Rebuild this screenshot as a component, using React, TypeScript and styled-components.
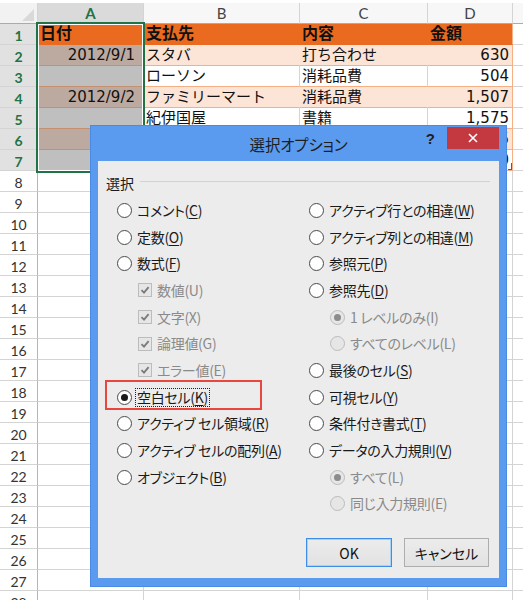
import React from 'react';
import styled, { createGlobalStyle } from 'styled-components';

const GlobalStyle = createGlobalStyle`
  html, body {
    margin: 0;
    padding: 0;
    background: #ffffff;
  }
  body {
    font-family: "Noto Sans CJK JP", sans-serif;
  }
`;

type Fill = 'title' | 'band' | 'white' | 'plain';

interface SheetRow {
  fill: Fill;
  cells: string[];
}

// widths of the row header + columns A..E
const COL_WIDTHS = [38, 106, 156, 128, 85, 80];
const COL_NAMES = ['A', 'B', 'C', 'D', 'E'];

const TABLE_ROWS: SheetRow[] = [
  { fill: 'title', cells: ['日付', '支払先', '内容', '金額'] },
  { fill: 'band', cells: ['2012/9/1', 'スタバ', '打ち合わせ', '630'] },
  { fill: 'white', cells: ['', 'ローソン', '消耗品費', '504'] },
  { fill: 'band', cells: ['2012/9/2', 'ファミリーマート', '消耗品費', '1,507'] },
  { fill: 'white', cells: ['', '紀伊国屋', '書籍', '1,575'] },
  { fill: 'band', cells: ['', 'セブンイレブン', '消耗品費', '315'] },
  { fill: 'white', cells: ['', '丸善', '書籍', '2,940'] },
];

const SHEET_FONT = `"DejaVu Sans", "Noto Sans CJK JP", sans-serif`;
const HEAD_FONT = `Lato, "Liberation Sans", sans-serif`;

const Sheet = styled.div`
  position: relative;
  width: 523px;
  height: 600px;
  overflow: hidden;
  background: #ffffff;
`;

const HeaderRow = styled.div`
  display: flex;
  height: 24px;
  box-sizing: border-box;
  padding-top: 3px;
`;

const Corner = styled.div`
  flex: 0 0 38px;
  box-sizing: border-box;
  display: flex;
  align-items: flex-end;
  justify-content: flex-end;
  padding: 0 3px 2px 0;
  background: #f2f2f2;
  border-right: 1px solid #d4d4d4;
  border-bottom: 1px solid #ababab;

  svg {
    width: 12px;
    height: 12px;
  }
`;

const ColHead = styled.div<{ $w: number; $active?: boolean }>`
  flex: 0 0 ${p => p.$w}px;
  box-sizing: border-box;
  display: flex;
  align-items: center;
  justify-content: center;
  background: ${p => (p.$active ? '#dadada' : '#f7f7f7')};
  border-right: 1px solid #d4d4d4;
  border-bottom: 1px solid ${p => (p.$active ? '#217346' : '#ababab')};
  color: ${p => (p.$active ? '#217346' : '#444444')};
  font-family: ${HEAD_FONT};
  font-size: 15px;
  font-weight: ${p => (p.$active ? 700 : 400)};
`;

const Row = styled.div`
  display: flex;
  height: 21px;
`;

const RowHead = styled.div<{ $active?: boolean }>`
  flex: 0 0 38px;
  box-sizing: border-box;
  display: flex;
  align-items: center;
  justify-content: center;
  padding-top: 3px;
  background: ${p => (p.$active ? '#e1e1e1' : '#ffffff')};
  border-right: 1px solid #b6b6b6;
  border-bottom: 1px solid #d4d4d4;
  color: ${p => (p.$active ? '#217346' : '#333333')};
  font-family: ${HEAD_FONT};
  font-size: 14px;
  font-weight: ${p => (p.$active ? 700 : 400)};
`;

const fillStyle = (fill: Fill, sel: boolean) => {
  if (sel) {
    return fill === 'band'
      ? 'background: #bcaaa1; border-bottom-color: #c4906f; border-right-color: #bcaaa1;'
      : 'background: #bfbfbf; border-bottom-color: #c4906f; border-right-color: #bfbfbf;';
  }
  switch (fill) {
    case 'title':
      return 'background: #ea6b1f; border-bottom-color: #ea6b1f; border-right-color: #ea6b1f; font-weight: 700; font-size: 16px;';
    case 'band':
      return 'background: #fce4d6; border-bottom-color: #f4b084; border-right-color: #fce4d6;';
    case 'white':
      return 'background: #ffffff; border-bottom-color: #f4b084; border-right-color: #d4d4d4;';
    default:
      return 'background: #ffffff; border-bottom-color: #d4d4d4; border-right-color: #d4d4d4;';
  }
};

const Cell = styled.div<{ $w: number; $fill: Fill; $sel?: boolean; $num?: boolean; $edge?: boolean; $pad?: number }>`
  flex: 0 0 ${p => p.$w}px;
  box-sizing: border-box;
  display: flex;
  align-items: flex-end;
  justify-content: ${p => (p.$num ? 'flex-end' : 'flex-start')};
  padding: 0 ${p => p.$pad ?? 3}px 0 2px;
  border-right: 1px solid;
  border-bottom: 1px solid;
  overflow: hidden;
  white-space: nowrap;
  color: #111111;
  font-family: ${SHEET_FONT};
  font-size: 15px;
  line-height: 20px;
  ${p => fillStyle(p.$fill, !!p.$sel)}
  ${p => (p.$edge ? 'border-right-color: #f4b084;' : '')}
`;

const Selection = styled.div`
  position: absolute;
  left: 36px;
  top: 22px;
  width: 109px;
  height: 151px;
  box-sizing: border-box;
  border: 2px solid #217346;
  box-shadow: inset 0 0 0 1px #ffffff;
  pointer-events: none;
`;

const ResizeMark = styled.div`
  position: absolute;
  left: 508px;
  top: 163px;
  width: 3px;
  height: 6px;
  border-right: 1px solid #3b5fae;
  border-bottom: 1px solid #3b5fae;
`;

/* ---------- dialog ---------- */

const Dialog = styled.div`
  position: absolute;
  left: 90px;
  top: 125px;
  width: 417px;
  height: 462px;
  box-sizing: border-box;
  display: flex;
  flex-direction: column;
  padding: 0 7px 8px;
  background: #5a9bf0;
  border: 1px solid #4a8ae2;
  font-family: "Noto Sans CJK JP", sans-serif;
  font-feature-settings: "palt";
  color: #1a1a1a;
`;

const TitleBar = styled.div`
  height: 35px;
  display: grid;
  grid-template-columns: 1fr auto 1fr;
  align-items: center;
`;

const TitleText = styled.div`
  grid-column: 2;
  font-size: 15.5px;
  color: #1e1e1e;
  letter-spacing: -0.2px;
`;

const TitleControls = styled.div`
  align-self: start;
  justify-self: end;
  display: flex;
  align-items: center;
  gap: 12px;
  padding-top: 1px;
`;

const HelpMark = styled.span`
  font-family: "Liberation Sans", sans-serif;
  font-size: 15px;
  font-weight: 700;
  color: #1e1e1e;
`;

const CloseButton = styled.div`
  width: 52px;
  height: 22px;
  display: flex;
  align-items: center;
  justify-content: center;
  background: #c4393f;

  svg {
    width: 10px;
    height: 10px;
  }
`;

const Panel = styled.div`
  flex: 1;
  display: flex;
  flex-direction: column;
  background: #ececec;
`;

const GroupHeader = styled.div`
  height: 22px;
  margin: 11px 9px 0 8px;
  display: flex;
  align-items: center;
  gap: 6px;
  font-size: 14px;

  &::after {
    content: '';
    flex: 1;
    height: 1px;
    margin-top: -3px;
    background: #d2d2d2;
  }
`;

const Options = styled.div`
  display: grid;
  grid-template-columns: 192px 1fr;
  padding: 3px 0 0 19px;
`;

const OptionColumn = styled.div`
  display: flex;
  flex-direction: column;
`;

const OptionRow = styled.div<{ $sub?: boolean; $mark?: boolean }>`
  position: relative;
  height: 26.7px;
  display: flex;
  align-items: center;
  gap: 5px;
  padding-left: ${p => (p.$sub ? 21 : 0)}px;
  font-size: 14px;

  ${p =>
    p.$mark
      ? `&::before {
          content: '';
          position: absolute;
          left: -12px;
          top: -4px;
          width: 157px;
          height: 30px;
          box-sizing: border-box;
          border: 2px solid #e8473f;
        }`
      : ''}
`;

const Radio = styled.span<{ $checked?: boolean; $disabled?: boolean }>`
  flex: 0 0 15px;
  width: 15px;
  height: 15px;
  box-sizing: border-box;
  border-radius: 50%;
  display: flex;
  align-items: center;
  justify-content: center;
  border: 1px solid ${p => (p.$disabled ? '#bcbcbc' : '#4a4a4a')};
  background: ${p => (p.$disabled ? '#e6e6e6' : '#ffffff')};

  &::after {
    content: '';
    display: ${p => (p.$checked ? 'block' : 'none')};
    width: 7px;
    height: 7px;
    border-radius: 50%;
    background: ${p => (p.$disabled ? '#8c8c8c' : '#1a1a1a')};
  }
`;

const CheckBox = styled.span`
  flex: 0 0 14px;
  width: 14px;
  height: 14px;
  box-sizing: border-box;
  display: flex;
  align-items: center;
  justify-content: center;
  border: 1px solid #bcbcbc;
  background: #e6e6e6;

  svg {
    width: 10px;
    height: 10px;
  }
`;

const Label = styled.span<{ $disabled?: boolean; $focus?: boolean }>`
  white-space: nowrap;
  color: ${p => (p.$disabled ? '#8a8a8a' : '#1a1a1a')};
  line-height: 17px;
  letter-spacing: -0.3px;
  ${p => (p.$focus ? 'border: 1px dotted #222222; padding: 0 1px; margin-left: -2px;' : '')}

  u {
    text-underline-offset: 2px;
  }
`;

const ButtonRow = styled.div`
  margin-top: auto;
  display: flex;
  justify-content: flex-end;
  gap: 12px;
  padding: 0 10px 11px;
`;

const Button = styled.button<{ $primary?: boolean }>`
  width: ${p => (p.$primary ? 86 : 85)}px;
  height: 29px;
  box-sizing: border-box;
  padding: 0;
  border: 1px solid ${p => (p.$primary ? '#3c8fe8' : '#adadad')};
  box-shadow: ${p => (p.$primary ? 'inset 0 0 0 1px #a9d2f7' : 'none')};
  background: linear-gradient(#ececec, #e2e2e2);
  color: #111111;
  font-family: "Noto Sans CJK JP", sans-serif;
  font-feature-settings: "palt";
  font-size: 14px;
`;

interface Option {
  label: string;
  key: string;
  kind: 'radio' | 'check';
  sub?: boolean;
  checked?: boolean;
  disabled?: boolean;
  focus?: boolean;
  mark?: boolean;
}

const LEFT_OPTIONS: Option[] = [
  { label: 'コメント', key: 'C', kind: 'radio' },
  { label: '定数', key: 'O', kind: 'radio' },
  { label: '数式', key: 'F', kind: 'radio' },
  { label: '数値', key: 'U', kind: 'check', sub: true, checked: true, disabled: true },
  { label: '文字', key: 'X', kind: 'check', sub: true, checked: true, disabled: true },
  { label: '論理値', key: 'G', kind: 'check', sub: true, checked: true, disabled: true },
  { label: 'エラー値', key: 'E', kind: 'check', sub: true, checked: true, disabled: true },
  { label: '空白セル', key: 'K', kind: 'radio', checked: true, focus: true, mark: true },
  { label: 'アクティブ セル領域', key: 'R', kind: 'radio' },
  { label: 'アクティブ セルの配列', key: 'A', kind: 'radio' },
  { label: 'オブジェクト', key: 'B', kind: 'radio' },
];

const RIGHT_OPTIONS: Option[] = [
  { label: 'アクティブ行との相違', key: 'W', kind: 'radio' },
  { label: 'アクティブ列との相違', key: 'M', kind: 'radio' },
  { label: '参照元', key: 'P', kind: 'radio' },
  { label: '参照先', key: 'D', kind: 'radio' },
  { label: '1 レベルのみ', key: 'I', kind: 'radio', sub: true, checked: true, disabled: true },
  { label: 'すべてのレベル', key: 'L', kind: 'radio', sub: true, disabled: true },
  { label: '最後のセル', key: 'S', kind: 'radio' },
  { label: '可視セル', key: 'Y', kind: 'radio' },
  { label: '条件付き書式', key: 'T', kind: 'radio' },
  { label: 'データの入力規則', key: 'V', kind: 'radio' },
  { label: 'すべて', key: 'L', kind: 'radio', sub: true, checked: true, disabled: true },
  { label: '同じ入力規則', key: 'E', kind: 'radio', sub: true, disabled: true },
];

const CheckMark = () => (
  <svg viewBox="0 0 10 10">
    <path d="M1.5 5.2 L4 7.6 L8.6 2.2" fill="none" stroke="#7a7a7a" strokeWidth={1.8} />
  </svg>
);

const OptionItem: React.FC<{ option: Option }> = ({ option }) => (
  <OptionRow $sub={option.sub} $mark={option.mark}>
    {option.kind === 'radio' ? (
      <Radio $checked={option.checked} $disabled={option.disabled} />
    ) : (
      <CheckBox>{option.checked && <CheckMark />}</CheckBox>
    )}
    <Label $disabled={option.disabled} $focus={option.focus}>
      {option.label}(
      {option.disabled ? option.key : <u>{option.key}</u>})
    </Label>
  </OptionRow>
);

const SelectOptionsDialog: React.FC = () => (
  <Dialog>
    <TitleBar>
      <TitleText>選択オプション</TitleText>
      <TitleControls>
        <HelpMark>?</HelpMark>
        <CloseButton>
          <svg viewBox="0 0 10 10">
            <path d="M1 1 L9 9 M9 1 L1 9" stroke="#ffffff" strokeWidth={1.6} />
          </svg>
        </CloseButton>
      </TitleControls>
    </TitleBar>
    <Panel>
      <GroupHeader>選択</GroupHeader>
      <Options>
        <OptionColumn>
          {LEFT_OPTIONS.map(o => (
            <OptionItem key={o.label} option={o} />
          ))}
        </OptionColumn>
        <OptionColumn>
          {RIGHT_OPTIONS.map(o => (
            <OptionItem key={o.label} option={o} />
          ))}
        </OptionColumn>
      </Options>
      <ButtonRow>
        <Button $primary>OK</Button>
        <Button>キャンセル</Button>
      </ButtonRow>
    </Panel>
  </Dialog>
);

const App: React.FC = () => {
  const blankRows = Array.from({ length: 21 }, (_, i) => i + 8);

  return (
    <>
      <GlobalStyle />
      <Sheet>
        <HeaderRow>
          <Corner>
            <svg viewBox="0 0 12 12">
              <polygon points="12,0 12,12 0,12" fill="#d9d9d9" />
            </svg>
          </Corner>
          {COL_NAMES.map((name, i) => (
            <ColHead key={name} $w={COL_WIDTHS[i + 1]} $active={name === 'A'}>
              {name}
            </ColHead>
          ))}
        </HeaderRow>

        {TABLE_ROWS.map((row, r) => (
          <Row key={r}>
            <RowHead $active>{r + 1}</RowHead>
            {row.cells.map((text, c) => (
              <Cell
                key={c}
                $w={COL_WIDTHS[c + 1]}
                $fill={row.fill}
                $sel={c === 0 && r > 0}
                $num={row.fill !== 'title' && (c === 0 || c === 3)}
                $pad={c === 0 ? 8 : 3}
                $edge={c === 3}
              >
                {text}
              </Cell>
            ))}
            <Cell $w={COL_WIDTHS[5]} $fill="plain" />
          </Row>
        ))}

        {blankRows.map(n => (
          <Row key={n}>
            <RowHead>{n}</RowHead>
            {COL_NAMES.map((name, c) => (
              <Cell key={name} $w={COL_WIDTHS[c + 1]} $fill="plain" />
            ))}
          </Row>
        ))}

        <Selection />
        <ResizeMark />
        <SelectOptionsDialog />
      </Sheet>
    </>
  );
};

export default App;
